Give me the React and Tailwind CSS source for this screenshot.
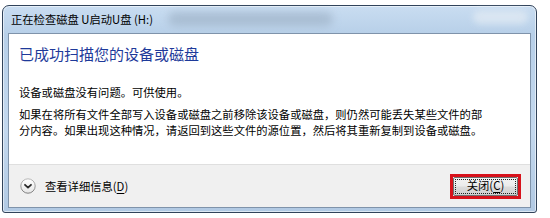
import React from "react";

const cjk = { fontFamily: '"Noto Sans CJK SC", "Noto Sans", sans-serif' };

function ExpandIcon() {
  return (
    <svg width="16" height="16" viewBox="0 0 16 16" className="shrink-0">
      <defs>
        <linearGradient id="ring" x1="0" y1="0" x2="0" y2="1">
          <stop offset="0" stopColor="#b8b8b8" />
          <stop offset="1" stopColor="#7d7d7d" />
        </linearGradient>
        <linearGradient id="fill" x1="0" y1="0" x2="0" y2="1">
          <stop offset="0" stopColor="#ffffff" />
          <stop offset="1" stopColor="#e6e6e6" />
        </linearGradient>
      </defs>
      <circle cx="8" cy="8" r="7.2" fill="url(#fill)" stroke="url(#ring)" strokeWidth="1" />
      <path d="M5 6.8 L8 9.6 L11 6.8" fill="none" stroke="#2a2a2a" strokeWidth="1.8" strokeLinecap="round" strokeLinejoin="round" />
    </svg>
  );
}

export default function App() {
  return (
    <div className="w-[550px] h-[218px] bg-white overflow-hidden pt-[5px] pl-[2px]" style={cjk}>
      <div className="relative w-[535px] h-[208px] rounded-t-[7px] rounded-b-[3px] border border-[#31435a] bg-[linear-gradient(180deg,#c9ddf1_0%,#b7cfe8_14%,#c3d8ee_60%,#b1c9e3_100%)] flex flex-col shadow-[inset_0_0_0_1px_rgba(255,255,255,0.55)]">
        <div className="absolute left-[165px] top-[6px] w-[165px] h-[14px] rounded-full bg-[#9fb3c8] blur-[4px] opacity-70" />
        <div className="absolute left-[470px] top-[4px] w-[55px] h-[14px] rounded-full bg-[#dfe9f3] blur-[3px] opacity-80" />
        <div className="relative h-[27px] flex items-center pl-[8px] text-[11.3px] text-black leading-none">
          正在检查磁盘 U启动U盘 (H:)
        </div>
        <div className="relative mx-[5px] mb-[4px] flex-1 flex flex-col border border-[#7f93aa] bg-white">
          <div className="h-[130px] px-[10px] pt-[10px] text-black">
            <div className="text-[15px] leading-[20px] text-[#1e3a9a] whitespace-nowrap">已成功扫描您的设备或磁盘</div>
            <div className="mt-[20px] text-[11.3px] leading-[16px] whitespace-nowrap">设备或磁盘没有问题。可供使用。</div>
            <div className="mt-[6px] text-[11.3px] leading-[16px]">
              <div className="whitespace-nowrap">如果在将所有文件全部写入设备或磁盘之前移除该设备或磁盘，则仍然可能丢失某些文件的部</div>
              <div className="whitespace-nowrap">分内容。如果出现这种情况，请返回到这些文件的源位置，然后将其重新复制到设备或磁盘。</div>
            </div>
          </div>
          <div className="flex-1 flex items-center justify-between border-t border-[#dfdfdf] bg-[#f0f0f0] pl-[11px] pr-[9px]">
            <div className="flex items-center gap-[9px] text-[11.3px] text-black">
              <ExpandIcon />
              <span>
                查看详细信息(<span className="underline underline-offset-2">D</span>)
              </span>
            </div>
            <div className="w-[71px] h-[25px] border-[3px] border-[#d7121b] flex">
              <div className="flex-1 rounded-[2px] border border-[#707070] bg-[linear-gradient(180deg,#f3f3f3_0%,#ebebeb_48%,#dcdcdc_52%,#cfcfcf_100%)] p-[1px] flex">
                <div className="flex-1 border border-dotted border-[#222] flex items-center justify-center text-[11.3px] text-black leading-none">
                  关闭(<span className="underline underline-offset-2">C</span>)
                </div>
              </div>
            </div>
          </div>
        </div>
      </div>
    </div>
  );
}
